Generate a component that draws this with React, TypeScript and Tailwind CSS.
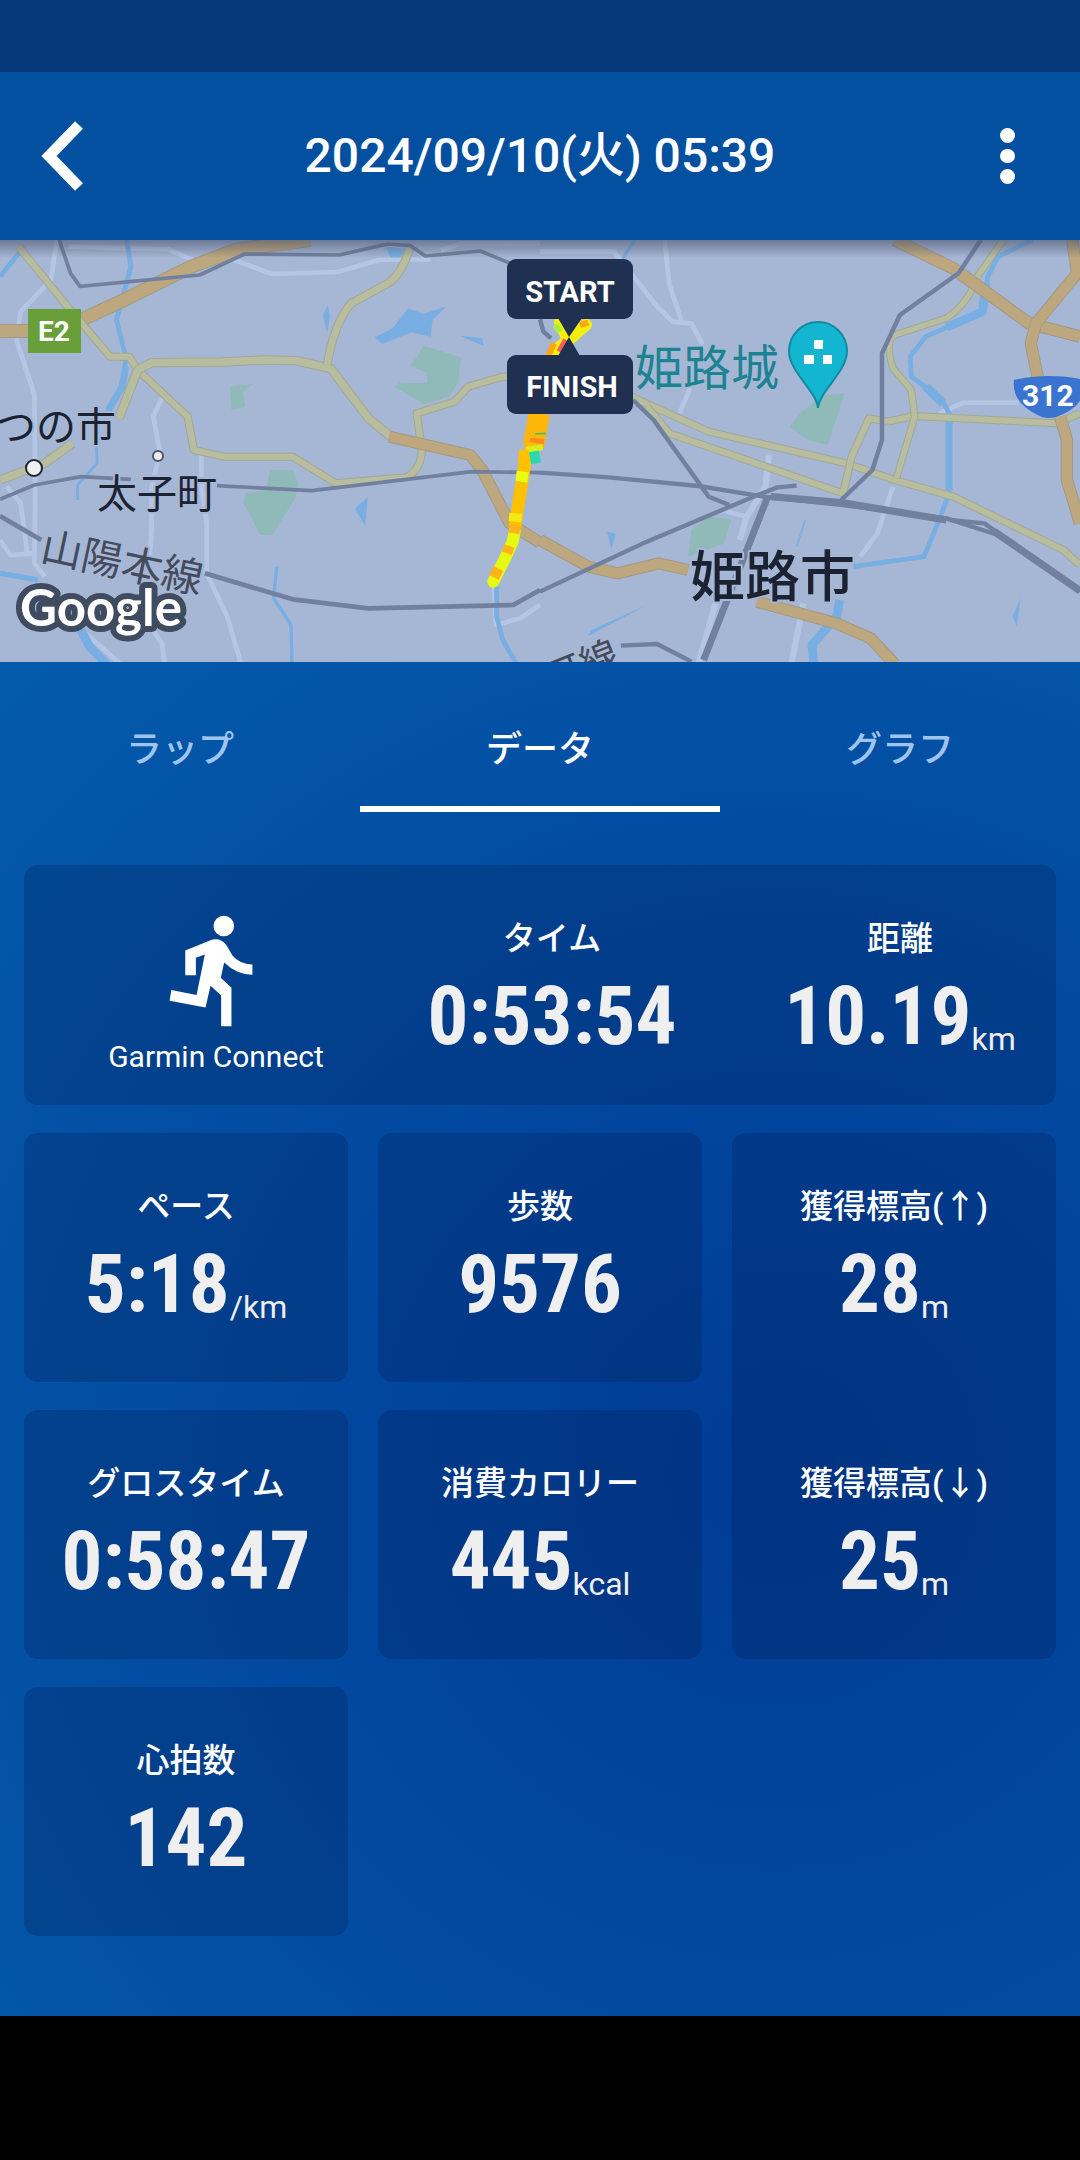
import React, { useState } from 'react';

const WATER = '#78aee2';
const PARK = '#8fbab8';
const MINOR = '#b5c6e4';
const ROAD = '#b7bd9e';
const ROAD_EDGE = '#a3a893';
const HIGHWAY = '#bda77f';
const HIGHWAY_EDGE = '#a39a83';
const RAIL = '#71809f';

type RoadProps = { d: string; width?: number };

function Road({ d, width = 24 }: RoadProps) {
  return (
    <>
      <path d={d} stroke={ROAD_EDGE} strokeWidth={width} />
      <path d={d} stroke={ROAD} strokeWidth={width - 6} />
    </>
  );
}

function Highway({ d, width = 32 }: RoadProps) {
  return (
    <>
      <path d={d} stroke={HIGHWAY_EDGE} strokeWidth={width} />
      <path d={d} stroke={HIGHWAY} strokeWidth={width - 6} />
    </>
  );
}

function WestMap() {
  return (
    <g transform="scale(0.34439 0.33333)" fill="none" strokeLinejoin="round">
      <g fill={PARK}>
        <path d="M1230 317L1338 352L1330 430L1302 470L1232 492L1145 440L1160 428L1240 430V398L1190 376L1212 350Z" />
        <path d="M668 440L735 432L705 456L712 500L672 510Z" />
        <path d="M785 690H850L866 730L858 775L790 885H756L708 790L712 760L772 750Z" />
      </g>
      <g fill={WATER}>
        <path d="M1088 292L1140 265L1185 205L1230 222L1298 198L1256 240L1250 290L1195 277L1110 312Z" />
        <path d="M1335 287L1400 295L1405 318Z" />
        <path d="M952 195L958 230L950 280L938 225Z" />
        <path d="M1030 805L1068 772L1060 858Z" />
        <path d="M1120 20L1175 26L1160 58L1135 55Z" />
      </g>
      <g stroke={MINOR} strokeWidth="14">
        <path d="M165 0L148 120L60 215L48 300L100 465L102 760L100 970L130 1010" />
        <path d="M200 20L490 28L560 60H680L790 102L980 96L1100 60L1250 58" />
        <path d="M1280 30L1340 10H1568" />
        <path d="M470 475L445 530L465 640L440 740V870L430 1020" />
        <path d="M585 640V740L600 850V1000L660 1130L700 1272" />
        <path d="M0 900L30 945L100 940M20 740L60 790L80 945" />
        <path d="M160 1100L350 1272M430 1150L470 1210L478 1272" />
        <path d="M1434 1030L1440 1155L1510 1135L1568 1095" />
      </g>
      <g stroke={WATER}>
        <path d="M0 110L70 20" strokeWidth="14" />
        <path d="M368 0L380 80L338 240L365 350L360 430L310 520" strokeWidth="14" />
        <path d="M280 620L282 670L225 735V780" strokeWidth="8" />
        <path d="M365 380L355 440L315 510" strokeWidth="20" />
        <path d="M0 1000L110 1020" strokeWidth="16" />
        <path d="M235 1170L260 1220L310 1272" strokeWidth="26" />
        <path d="M803 980L795 1075L845 1155L848 1272" strokeWidth="10" />
        <path d="M1442 1040V1130L1460 1200L1500 1272" strokeWidth="14" />
      </g>
      <Highway d="M0 273H90M235 240L370 175L560 78L690 28L900 0" width={42} />
      <Road d="M55 20L70 40L200 205L320 350H375L400 390L545 530L563 630L650 650H850L975 730L1180 712Q1222 690 1225 630L1210 520L1320 485L1360 440L1460 410H1490" />
      <Road d="M0 720L130 670L210 610M345 535L400 390L440 368L640 366L770 360L860 362L960 385L1070 535L1135 590" width={28} />
      <Road d="M950 375Q970 250 1020 190L1135 125Q1175 85 1190 20" width={26} />
      <Highway d="M1130 590L1365 645L1400 690L1480 850L1568 908" width={36} />
      <g stroke={RAIL} strokeWidth="11">
        <path d="M172 0L205 100L232 139L580 105L710 42L985 45L1125 12L1190 16L1235 48L1395 33L1490 74" />
        <path d="M0 778L100 735L235 710L380 718M630 737L905 752L1370 695L1568 698" />
        <path d="M0 828L120 900M595 1000L850 1078L1070 1105L1490 1095L1568 1050" strokeWidth="14" />
      </g>
    </g>
  );
}

function EastMap() {
  return (
    <g transform="translate(540 0) scale(0.34439 0.33333)" fill="none" strokeLinejoin="round">
      <g fill={PARK}>
        <path d="M760 515L825 465L885 460L835 615L780 600L725 560Z" />
        <path d="M490 830L555 838L535 910L430 950L440 870Z" />
      </g>
      <g fill={WATER}>
        <path d="M195 875L220 882L207 928Z" />
        <path d="M1395 1075L1385 1158L1372 1130Z" />
        <path d="M150 1170L310 1095L140 1188Z" />
      </g>
      <g stroke={MINOR} strokeWidth="14">
        <path d="M0 35H215L340 200L385 245L440 250L470 310L430 460L405 520" />
        <path d="M362 0L375 130L410 240" />
        <path d="M665 645L655 740L600 830L580 900" strokeWidth="18" />
        <path d="M510 1090L460 1272M765 1090L730 1272" strokeWidth="18" />
        <path d="M1025 740L980 880L930 950M1160 520L1230 488H1390M530 810L600 830" />
      </g>
      <g stroke={WATER}>
        <path d="M275 0L240 55" strokeWidth="10" />
        <path d="M1430 0L1330 50L1300 110L1285 215L1120 290L1075 350L1078 410L1165 475L1188 520V760L1155 850L1115 950L910 980" strokeWidth="14" />
        <path d="M1295 130L1285 215L1180 262M1120 440L1170 490" strokeWidth="26" />
        <path d="M1188 540V750" strokeWidth="20" />
        <path d="M870 1080L862 1130L790 1215L795 1272" strokeWidth="26" />
        <path d="M770 840L745 920" strokeWidth="5" />
      </g>
      <Road d="M265 470L490 575L890 670L1030 720L1200 770L1520 930L1568 975" />
      <Road d="M310 500L375 580L880 760L905 650L955 535L1010 545L1085 528L1500 550L1568 520" />
      <Road d="M1345 0L1270 110Q1245 190 1180 235L1030 285Q1000 300 1025 385L1078 450L1088 530L1035 715" width={22} />
      <Highway d="M1030 0L1200 85L1420 250L1568 290" width={38} />
      <Highway d="M1545 0L1560 100L1440 250L1425 310L1445 410M1510 530L1530 600V720L1568 850" width={36} />
      <Highway d="M0 900L140 980L225 1000L345 970L430 990M630 1085L860 1150L960 1195L1030 1272" width={36} />
      <g stroke={RAIL} strokeWidth="13">
        <path d="M0 238L10 275L32 295" />
        <path d="M270 480L330 540L490 770L550 795" />
        <path d="M0 698L200 712L460 738L650 770L880 795L1180 835L1330 885L1568 1055" />
        <path d="M670 770L875 788L1180 840" strokeWidth="22" />
        <path d="M1280 0L1215 100L1045 225L993 340V600L965 690L875 780" />
        <path d="M0 1055L310 905L625 768L690 742L745 737" />
        <path d="M662 768L475 1260" strokeWidth="20" />
        <path d="M1190 840L1290 850L1568 1050" />
        <path d="M1320 875L1568 1052" strokeWidth="22" />
        <path d="M235 1217L340 1212L440 1265" />
      </g>
    </g>
  );
}

function Route() {
  return (
    <g transform="translate(480 10) scale(0.33333)" fill="none">
      <path d="M318 224L275 262L240 290L220 325M240 218L262 265" stroke="#f4ee10" strokeWidth="36" strokeLinecap="round" />
      <path d="M300 225L325 218M222 280L205 318" stroke="#ffa80a" strokeWidth="18" />
      <path d="M225 225L240 245" stroke="#a6f046" strokeWidth="18" />
      <path d="M258 270L238 305" stroke="#fb5b5b" strokeWidth="18" />
      <path d="M178 490L160 590" stroke="#ffb60a" strokeWidth="64" />
      <path d="M160 580L135 640L122 720L105 830" stroke="#ffc000" strokeWidth="38" />
      <path d="M150 570L192 575" stroke="#ff8a24" strokeWidth="14" />
      <path d="M165 552L198 550" stroke="#52b86a" strokeWidth="5" />
      <path d="M140 600L188 592" stroke="#d8ee20" strokeWidth="18" />
      <path d="M162 604L168 640" stroke="#2cd6b0" strokeWidth="30" />
      <path d="M132 600L128 640" stroke="#ffc000" strokeWidth="30" />
      <path d="M128 665L124 695" stroke="#e8ff10" strokeWidth="36" />
      <path d="M107 790L105 815" stroke="#f2ea10" strokeWidth="38" />
      <path d="M104 845L98 875L75 925L40 995" stroke="#e6f910" strokeWidth="36" strokeLinecap="round" />
      <path d="M106 825L102 850M88 888L80 910M55 955L42 982" stroke="#ffb31a" strokeWidth="32" />
    </g>
  );
}

function RouteMap() {
  return (
    <svg viewBox="0 0 1080 422" className="block w-full bg-[#a6b6d5]" role="img" aria-label="ルートマップ">
      <defs>
        <linearGradient id="shade" x1="0" y1="0" x2="0" y2="1">
          <stop offset="0" stopColor="#47506a" stopOpacity="0.6" />
          <stop offset="1" stopColor="#47506a" stopOpacity="0" />
        </linearGradient>
      </defs>
      <WestMap />
      <EastMap />
      <Route />

      <g fontFamily="'Noto Sans CJK JP', sans-serif" stroke="#a6b6d5" strokeWidth="4" strokeLinejoin="round" paintOrder="stroke">
        <text x="-4" y="201" fontSize="40" fill="#1b2231">つの市</text>
        <text x="97" y="268" fontSize="40" fill="#1b2231">太子町</text>
        <text x="39" y="320" fontSize="41" fill="#434b5c" transform="rotate(12 39 320)">山陽本線</text>
        <text x="635" y="145" fontSize="48" fill="#1c8391">姫路城</text>
        <text x="690" y="356" fontSize="55" fontWeight="500" fill="#1b2231">姫路市</text>
        <text x="551" y="453" fontSize="38" fill="#434b5c" transform="rotate(-22 551 453)">可線</text>
      </g>

      <circle cx="34" cy="228" r="8" fill="#eef0f2" stroke="#1b2231" strokeWidth="2" />
      <circle cx="158" cy="216" r="5" fill="#eef0f2" stroke="#4d5567" strokeWidth="2" />

      <rect x="28" y="69" width="53" height="44" fill="#689f38" />
      <text x="54" y="101" textAnchor="middle" fontFamily="Roboto, sans-serif" fontSize="28" fontWeight="700" fill="#fff">E2</text>

      <path d="M1014 140Q1030 136 1049 136Q1070 136 1084 140Q1088 166 1056 177Q1049 179 1042 177Q1011 164 1014 140Z" fill="#3b74d0" />
      <text x="1022" y="166" fontFamily="Roboto, sans-serif" fontSize="30" fontWeight="700" fill="#fff">312</text>

      <path d="M818 168C816 150 789 132 789 111A29 29 0 0 1 847 111C847 132 820 150 818 168Z" fill="#14b5d0" stroke="#128a9f" strokeWidth="2" />
      <path d="M814 100h9v9h-9zM804 115h10v9h-10zM823 115h9v9h-9z" fill="#fff" />

      <g fill="#1f3050">
        <rect x="507" y="19" width="126" height="60" rx="9" />
        <path d="M558 78L569 97L582 78Z" />
        <rect x="507" y="115" width="126" height="59" rx="9" />
        <path d="M558 116L569 97L580 116Z" />
      </g>
      <g fontFamily="Roboto, sans-serif" fontSize="29" fontWeight="700" fill="#fff" textAnchor="middle">
        <text x="570" y="62">START</text>
        <text x="572" y="157">FINISH</text>
      </g>

      <text x="20" y="386" fontFamily="Lato, sans-serif" fontSize="51" fontWeight="700" fill="#fff" stroke="#3f4b5e" strokeWidth="12" strokeLinejoin="round" paintOrder="stroke">
        Google
      </text>
      <rect width="1080" height="18" fill="url(#shade)" />
    </svg>
  );
}

function Runner() {
  return (
    <svg viewBox="88 43 284 337" className="h-28 w-[95px]" fill="#fff" aria-hidden="true">
      <circle cx="252" cy="76" r="31" />
      <path d="M136 150L210 120Q240 108 260 134L278 165Q298 190 338 192V223Q290 222 253 186L243 232L275 262V378H244V285L212 256L197 321L89 301L94 269L170 284L195 162L168 172V224H136Z" />
    </svg>
  );
}

type Metric = { label: string; value: string; unit?: string };

function Stat({ label, value, unit }: Metric) {
  return (
    <dl className="flex flex-col items-center pt-[54px] text-center">
      <dt className="text-[33px] leading-10 font-medium text-white">{label}</dt>
      <dd className="mt-3.5 flex items-end whitespace-nowrap text-[#efeff0]">
        <span className="font-['Roboto_Condensed',Roboto,sans-serif] text-[81px] leading-[88px] font-bold">{value}</span>
        {unit && <span className="text-[32px] leading-[44px]">{unit}</span>}
      </dd>
    </dl>
  );
}

const CARD = 'rounded-[14px] bg-[#04205a]/30';
const TABS = ['ラップ', 'データ', 'グラフ'];

export default function App() {
  const [active, setActive] = useState('データ');
  return (
    <div className="flex min-h-screen flex-col bg-black font-[Roboto,'Noto_Sans_CJK_JP',sans-serif] text-white">
      <div className="h-[72px] bg-[#053878]" />
      <header className="flex h-[168px] items-center justify-between bg-[#034fa0] pr-11 pl-9">
        <button type="button" aria-label="戻る" className="flex h-14 w-16 items-center">
          <svg viewBox="0 0 56 80" className="h-20 w-14 shrink-0" fill="none" stroke="#fff" strokeWidth="11" aria-hidden="true">
            <path d="M43 9L13 40L43 71" />
          </svg>
        </button>
        <h1 className="text-[48px] leading-none font-medium">2024/09/10(火) 05:39</h1>
        <button type="button" aria-label="メニュー" className="flex size-14 flex-col items-center justify-center gap-1.5">
          <span className="size-[15px] rounded-full bg-white" />
          <span className="size-[15px] rounded-full bg-white" />
          <span className="size-[15px] rounded-full bg-white" />
        </button>
      </header>

      <RouteMap />

      <main className="flex-1 bg-[radial-gradient(circle_at_72%_60%,#003b95_0%,#0249a0_45%,#045bab_100%)] pb-20">
        <div role="tablist" className="grid h-[150px] grid-cols-3">
          {TABS.map((tab) => (
            <button
              key={tab}
              type="button"
              role="tab"
              aria-selected={tab === active}
              onClick={() => setActive(tab)}
              className={
                tab === active
                  ? 'border-b-6 border-white pt-8 text-[36px] font-medium text-white'
                  : 'border-b-6 border-transparent pt-8 text-[36px] font-medium text-[#9fc4ee]'
              }
            >
              {tab}
            </button>
          ))}
        </div>

        <div className="mt-[53px] flex flex-col gap-7 px-6">
          <section className={`${CARD} grid h-60 grid-cols-[12fr_16fr_13fr] pl-12`}>
            <div className="flex flex-col items-center pt-[50px]">
              <Runner />
              <p className="mt-3 text-[30px] leading-9">Garmin Connect</p>
            </div>
            <Stat label="タイム" value="0:53:54" />
            <Stat label="距離" value="10.19" unit="km" />
          </section>
          <div className="grid auto-rows-[249px] grid-cols-3 gap-x-[30px] gap-y-7">
            <section className={CARD}><Stat label="ペース" value="5:18" unit="/km" /></section>
            <section className={CARD}><Stat label="歩数" value="9576" /></section>
            <section className={`${CARD} row-span-2 grid grid-rows-2 gap-7`}>
              <Stat label="獲得標高(↑)" value="28" unit="m" />
              <Stat label="獲得標高(↓)" value="25" unit="m" />
            </section>
            <section className={CARD}><Stat label="グロスタイム" value="0:58:47" /></section>
            <section className={CARD}><Stat label="消費カロリー" value="445" unit="kcal" /></section>
            <section className={CARD}><Stat label="心拍数" value="142" /></section>
          </div>
        </div>
      </main>
      <footer className="h-36 bg-black" />
    </div>
  );
}
